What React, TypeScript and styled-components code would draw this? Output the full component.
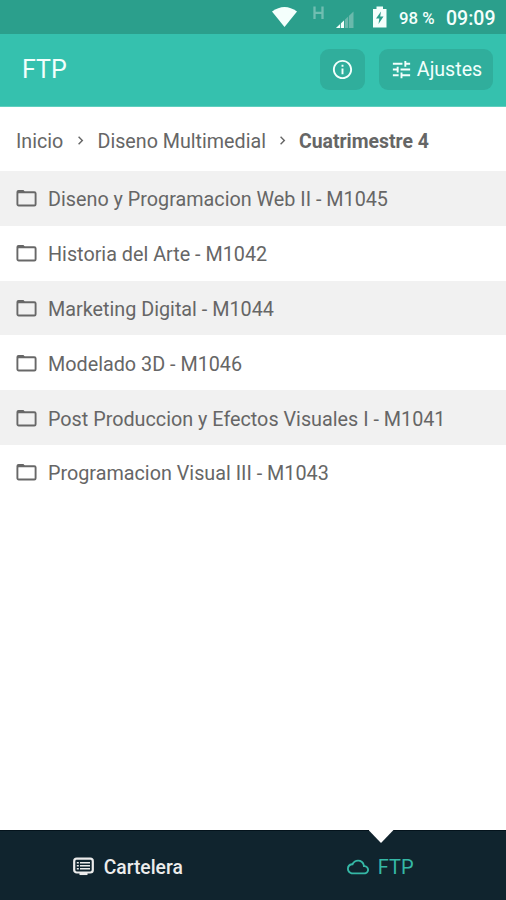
import React from "react";
import styled, { createGlobalStyle } from "styled-components";
import { MdInfoOutline, MdTune, MdCloudQueue, MdChevronRight } from "react-icons/md";

const GlobalStyle = createGlobalStyle`
  * { box-sizing: border-box; }
  body { margin: 0; background: #fff; font-family: Roboto, "Liberation Sans", sans-serif; }
`;

const Screen = styled.div`
  width: 506px;
  height: 900px;
  display: flex;
  flex-direction: column;
  overflow: hidden;
  background: #fff;
  color: #666;
`;

const StatusBar = styled.div`
  height: 34px;
  flex: none;
  display: flex;
  align-items: center;
  background: #2b9f8c;
  color: #f4fffc;
`;

const StatusIcons = styled.svg`
  width: 388px;
  height: 34px;
  flex: none;
`;

const Battery = styled.span`
  width: 58px;
  padding: 2px 0 0 11px;
  font-size: 16.8px;
  font-weight: 500;
  white-space: nowrap;
`;

const Clock = styled.span`
  font-size: 19.5px;
  font-weight: 500;
  padding-top: 2px;
`;

const Header = styled.header`
  height: 73px;
  flex: none;
  display: flex;
  align-items: center;
  gap: 14px;
  padding: 0 13px 2px 22px;
  background: #35c1ae;
  border-bottom: 1px solid #5fcfbf;
`;

const Title = styled.h1`
  margin: 0 auto 0 0;
  font-size: 25px;
  font-weight: 400;
  color: #f2fffc;
`;

const HeaderButton = styled.button<{ $width: number }>`
  width: ${(p) => p.$width}px;
  height: 41px;
  display: flex;
  align-items: center;
  justify-content: center;
  gap: 4px;
  padding: 0;
  border: 0;
  border-radius: 9px;
  background: #30ae9c;
  color: #f2fffc;
  font: 400 19.6px Roboto, sans-serif;
`;

const Breadcrumb = styled.nav`
  height: 64px;
  flex: none;
  display: flex;
  align-items: center;
  padding: 4px 0 0 16px;
  font-size: 19.7px;
  white-space: nowrap;
`;

const Crumb = styled.span<{ $current?: boolean; $width: number }>`
  width: ${(p) => p.$width}px;
  font-weight: ${(p) => (p.$current ? 700 : 400)};
  font-size: ${(p) => (p.$current ? 19.4 : 19.7)}px;
`;

const Separator = styled.span`
  width: 33.500px;
  display: flex;
  justify-content: center;
  padding-bottom: 2px;
`;

const List = styled.ul`
  list-style: none;
  margin: 0;
  padding: 0;
  flex: 1;
`;

const Row = styled.li`
  height: 54.8px;
  display: flex;
  align-items: center;
  gap: 11px;
  padding: 3px 16px 0;
  font-size: 19.77px;
  white-space: nowrap;
  &:nth-child(odd) { background: #f1f1f1; }
`;

const FolderGlyph = styled.svg`
  width: 21px;
  height: 18px;
  flex: none;
  margin-top: -3px;
`;

const TabBar = styled.nav`
  height: 70px;
  flex: none;
  display: flex;
  background: #10242e;
  border-top: 1px solid #04131c;
`;

const Tab = styled.a<{ $active?: boolean }>`
  position: relative;
  flex: 1;
  display: flex;
  align-items: center;
  justify-content: center;
  gap: ${(p) => (p.$active ? 9 : 10)}px;
  padding: 3px 0 0 ${(p) => (p.$active ? 1 : 2)}px;
  font-size: ${(p) => (p.$active ? 20 : 19.3)}px;
  font-weight: ${(p) => (p.$active ? 400 : 500)};
  color: ${(p) => (p.$active ? "#35b8a6" : "#ececec")};
`;

const BoardGlyph = styled.svg`
  width: 21px;
  height: 19px;
  flex: none;
  margin-top: -2px;
`;

const Notch = styled.span`
  position: absolute;
  top: -1px;
  left: 115px;
  width: 25px;
  height: 13px;
  background: #fff;
  clip-path: polygon(0 0, 100% 0, 50% 100%);
`;

const folders = [
  "Diseno y Programacion Web II - M1045",
  "Historia del Arte - M1042",
  "Marketing Digital - M1044",
  "Modelado 3D - M1046",
  "Post Produccion y Efectos Visuales I - M1041",
  "Programacion Visual III - M1043",
];

function FolderIcon() {
  return (
    <FolderGlyph viewBox="0 0 21 18">
      <path d="M.5 3Q.5 1 2.500 1H7.500L9.500 3.700H.5Z" fill="#666" />
      <rect x="1.400" y="3.200" width="18.200" height="13.300" rx="1.300" fill="none" stroke="#686868" strokeWidth="1.900" />
    </FolderGlyph>
  );
}

function BoardIcon() {
  return (
    <BoardGlyph viewBox="0 0 21 19" fill="none" stroke="currentColor">
      <rect x="1.200" y="1.700" width="18.600" height="13.800" rx="2.500" strokeWidth="2.200" />
      <path d="M3.800 5.700h2M7 5.700h10M3.800 8.700h2M7 8.700h10M3.800 11.700h2M7 11.700h10" strokeWidth="1.500" />
      <path d="M6.500 16.800h8" strokeWidth="2.500" />
    </BoardGlyph>
  );
}

export default function App() {
  return (
    <Screen>
      <GlobalStyle />
      <StatusBar>
        <StatusIcons viewBox="0 0 388 34" fill="currentColor">
          <path d="M272 11.500Q284.500 2.500 297 11.500L284.500 27Z" />
          <path d="M314.500 6.500v12.500M322.500 6.500v12.500M314.500 12.800h8" fill="none" stroke="#70beb1" strokeWidth="2.300" />
          <path d="M336 28 353.500 11.500V28Z" fill="#6ab9ac" />
          <path d="M336 28 344 20.500V28Z" />
          <path d="M340.500 22v6M344.500 19v9M348.500 15v13" stroke="#2b9f8c" strokeWidth=".8" />
          <path d="M373 9h3.500V6.500h6.500V9h3.500v18.500H373Z" />
          <path d="M381 11.500 376 18.500h3.300L378.500 24l5-7.500h-3.300Z" fill="#2b9f8c" />
        </StatusIcons>
        <Battery>98 %</Battery>
        <Clock>09:09</Clock>
      </StatusBar>
      <Header>
        <Title>FTP</Title>
        <HeaderButton $width={45} aria-label="Info"><MdInfoOutline size={23} /></HeaderButton>
        <HeaderButton $width={114}><MdTune size={23} />Ajustes</HeaderButton>
      </Header>
      <Breadcrumb>
        <Crumb $width={48}>Inicio</Crumb>
        <Separator><MdChevronRight size={17} /></Separator>
        <Crumb $width={168}>Diseno Multimedial</Crumb>
        <Separator><MdChevronRight size={17} /></Separator>
        <Crumb $current $width={140}>Cuatrimestre 4</Crumb>
      </Breadcrumb>
      <List>
        {folders.map((name) => (
          <Row key={name}><FolderIcon />{name}</Row>
        ))}
      </List>
      <TabBar>
        <Tab><BoardIcon />Cartelera</Tab>
        <Tab $active><Notch /><MdCloudQueue size={22} />FTP</Tab>
      </TabBar>
    </Screen>
  );
}
